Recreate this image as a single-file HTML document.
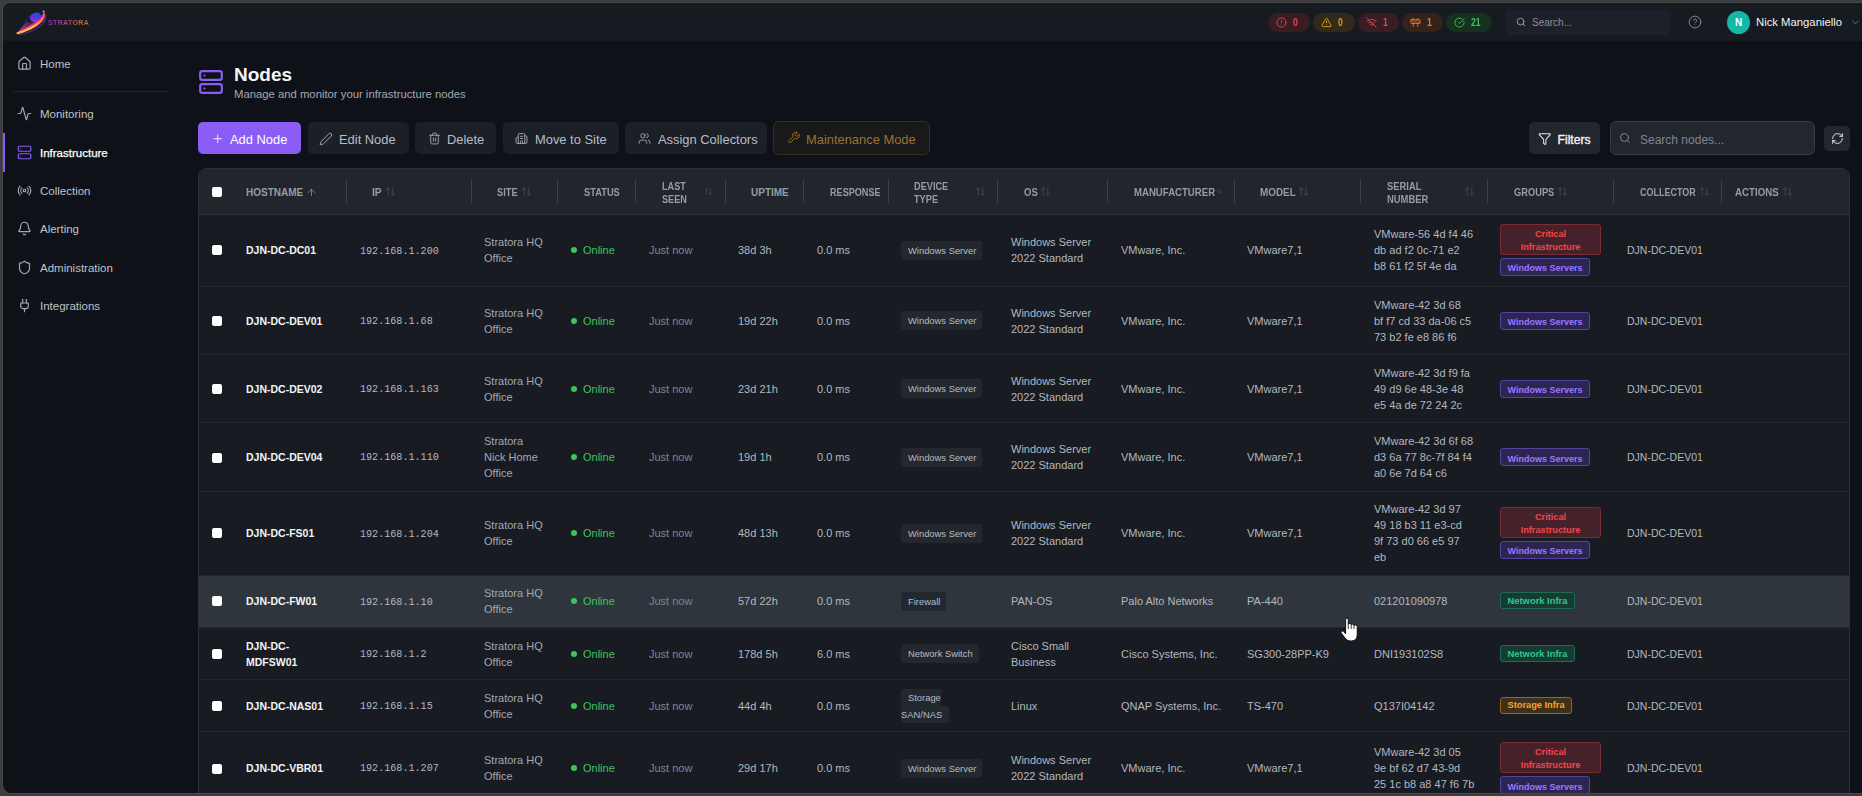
<!DOCTYPE html>
<html><head><meta charset="utf-8"><title>Nodes</title><style>
*{margin:0;padding:0}
html,body{width:1862px;height:796px;overflow:hidden;background:#3c3c3c}
body{position:relative;font-family:"Liberation Sans",sans-serif}
#win{position:absolute;left:3px;top:3px;width:1880px;height:790px;background:#0e1118;border-radius:8px;overflow:hidden;box-shadow:0 0 0 1px rgba(120,125,135,0.18)}
#abs{position:absolute;left:-3px;top:-3px;width:1862px;height:796px}
.t{position:absolute;white-space:nowrap;line-height:16px}
.ic{position:absolute;overflow:visible}
#hdr{position:absolute;left:0;top:3px;width:1862px;height:37.5px;background:#161a21}
.logo{font-size:7px;font-weight:bold;letter-spacing:0.35px;opacity:0.8;line-height:8px;background:linear-gradient(90deg,#a035e0 0%,#d04aa0 40%,#e86a50 65%,#e08a3a 80%,#f06a50 100%);-webkit-background-clip:text;background-clip:text;color:transparent}
.pill{position:absolute;top:13px;height:19px;border-radius:10px}
.pilln{font-size:10px;font-weight:bold;line-height:14px}
.hsearch{position:absolute;left:1506px;top:9px;width:164px;height:26px;background:#1d2028;border-radius:5px}
.hsearcht{font-size:10px;color:#8a9098;line-height:12px}
.avatar{position:absolute;left:1727px;top:11px;width:23px;height:23px;border-radius:50%;background:#14b8a6;color:#fff;font-size:10px;font-weight:bold;text-align:center;line-height:23px}
.uname{font-size:11.3px;color:#f2f3f5;line-height:14px}
.nav{font-size:11.5px;color:#bfc3ca;line-height:16px}
.navact{color:#ffffff;-webkit-text-stroke:0.25px #ffffff}
.title{font-size:19px;font-weight:bold;color:#f4f5f7;line-height:24px}
.sub{font-size:11.3px;color:#a3a8b0;line-height:14px}
.btn{position:absolute;top:122px;height:32px;border-radius:5px;background:#1b1f26}
.btnt{font-size:12.9px;color:#b9bdc4;line-height:16px}
.nsearch{position:absolute;left:1610px;top:121px;width:205px;height:34px;box-sizing:border-box;border:1px solid #353a43;background:#22262d;border-radius:6px}
#card{position:absolute;left:198px;top:168px;width:1652px;height:700px;box-sizing:border-box;border:1px solid #2a2e36;border-radius:8px;background:#181b22}
#thead{position:absolute;left:199px;top:169px;width:1650px;height:45px;background:#21252c;border-top-left-radius:7px;border-top-right-radius:7px;border-bottom:1px solid #30353d}
.th{font-size:10px;font-weight:bold;color:#959ca6;line-height:13px}
.tdiv{position:absolute;top:180px;width:1px;height:23px;background:#3d424a}
.cb{position:absolute;left:212px;width:10px;height:10px;background:#fff;border-radius:2px}
.row{position:absolute;left:199px;width:1650px}
.row .cb{left:13px}
.rline{position:absolute;left:199px;width:1650px;height:1px;background:#23272e}
.cell{position:absolute;top:0;height:100%;display:flex;flex-direction:column;justify-content:center;font-size:11px;line-height:16px;white-space:nowrap}
.host{font-weight:bold;font-size:10.5px;color:#f3f4f6}
.ip{font-family:"Liberation Mono",monospace;font-size:10.1px;color:#b4b9c0}
.site{color:#a3a8b0}
.online{color:#3ec45a;display:flex;flex-direction:row;align-items:center}
.dot{display:inline-block;width:6px;height:6px;border-radius:50%;background:#3ec45a;margin-right:6px}
.seen{color:#7f858e}
.val{color:#b3b8bf}
.coll{font-size:10.5px}
.dbadge{background:#23272e;color:#b8bcc3;font-size:9.4px;line-height:19px;height:19px;padding:0 6px 0 7px;border-radius:3px;position:relative;top:calc(var(--bo,0)*1px)}
.dbadge2{font-size:9.4px;line-height:17px;color:#b8bcc3}
.dbadge2 span{background:#23272e;display:inline-block;border-radius:3px}
.dbadge2 .s1{padding:0 0 0 7px;border-radius:3px 0 0 0}
.dbadge2 .s2{padding:0 6.5px 0 0;border-radius:0 3px 3px 3px}
.groups{align-items:flex-start}
.gb{font-size:9px;font-weight:bold;line-height:12.5px;padding:2px 6.5px;border:1px solid;border-radius:3px;box-sizing:border-box;text-align:center}
.gb+.gb{margin-top:3px}
.crit{font-size:9.2px;width:101px;line-height:13px;padding:3px 6.5px 0;background:#45222a;border-color:#7a2c33;color:#f0454d}
.win{background:#2c2552;border-color:#56419c;color:#9d78ff;line-height:11px;padding:4.5px 6.5px 0.5px}
.net{font-size:9.4px;background:#153b33;border-color:#1d6b52;color:#2cc98c;line-height:11px}
.sto{font-size:9.25px;background:#40301a;border-color:#9a661c;color:#f5a524;line-height:11px}
</style></head>
<body><div id="win"><div id="abs">
<div id="hdr"></div><svg class="ic" style="left:12px;top:6px;width:40px;height:32px" viewBox="0 0 40 32">
<defs>
<linearGradient id="lgs" x1="0" y1="1" x2="1" y2="0"><stop offset="0" stop-color="#ffb347"/><stop offset="0.45" stop-color="#ffcf3a"/><stop offset="0.8" stop-color="#ff7a30"/><stop offset="1" stop-color="#ff4a7a"/></linearGradient>
<linearGradient id="lgo" x1="0" y1="1" x2="1" y2="0"><stop offset="0" stop-color="#ff4d6d"/><stop offset="0.6" stop-color="#e0307a"/><stop offset="1" stop-color="#8a3cd0"/></linearGradient>
<linearGradient id="lgp" x1="0" y1="1" x2="1" y2="0"><stop offset="0" stop-color="#a038e8"/><stop offset="0.45" stop-color="#5a34e0"/><stop offset="0.8" stop-color="#2a48d8"/><stop offset="1" stop-color="#3a80f0"/></linearGradient>
<linearGradient id="lgt" x1="0" y1="1" x2="1" y2="0"><stop offset="0" stop-color="#ff5080" stop-opacity="0.95"/><stop offset="1" stop-color="#7a2cc0" stop-opacity="0.3"/></linearGradient>
</defs>
<path d="M4.8 27.6 L14 16 L22 16 L18 22 Z" fill="url(#lgt)"/>
<path d="M12 16.5 L19.5 8.5" stroke="#5a4ae8" stroke-width="1" stroke-dasharray="1 1" opacity="0.8"/><path d="M7 28.6 C15 27.2 25 23.6 30.6 17.6 C33 14.8 34 11.8 33.6 9" stroke="#7a3ad8" stroke-width="1.3" fill="none" opacity="0.6"/>
<ellipse cx="23.7" cy="11.3" rx="6" ry="4.6" transform="rotate(-22 23.7 11.3)" fill="url(#lgp)"/>
<path d="M4.6 27.8 C12 26.6 24 22.6 30 16 C33 12.5 33.5 9 32.2 6.2 C31 9 29 12 25.5 14.2 C19.5 18.5 12 23 4.6 27.8 Z" fill="url(#lgo)"/>
<path d="M5.5 27.2 C13 25 23 20.5 28.5 15.2 C31 12.5 32 10 32 7.5" stroke="url(#lgs)" stroke-width="2" fill="none" stroke-linecap="round"/>
<circle cx="31.5" cy="5.5" r="1.1" fill="#ff8a4a"/>
</svg><div class="t logo" style="left:48px;top:19px">STRATORA</div><div class="pill" style="left:1268px;width:42px;background:#3a1d22"></div><svg class="ic" style="left:1276px;top:17px;width:11px;height:11px;" viewBox="0 0 24 24" fill="none" stroke="#e5484d" stroke-width="2" stroke-linecap="round" stroke-linejoin="round"><circle cx="12" cy="12" r="10"/><line x1="12" x2="12" y1="8" y2="12"/><line x1="12" x2="12.01" y1="16" y2="16"/></svg><div class="t pilln" style="left:1292.5px;top:16px;color:#e5484d;transform:scaleX(0.86);transform-origin:0 0">0</div><div class="pill" style="left:1313px;width:42px;background:#33291a"></div><svg class="ic" style="left:1321px;top:17px;width:11px;height:11px;" viewBox="0 0 24 24" fill="none" stroke="#d4a020" stroke-width="2" stroke-linecap="round" stroke-linejoin="round"><path d="m21.73 18-8-14a2 2 0 0 0-3.48 0l-8 14A2 2 0 0 0 4 21h16a2 2 0 0 0 1.73-3"/><path d="M12 9v4"/><path d="M12 17h.01"/></svg><div class="t pilln" style="left:1337.5px;top:16px;color:#d4a020;transform:scaleX(0.86);transform-origin:0 0">0</div><div class="pill" style="left:1358px;width:41px;background:#3a1d22"></div><svg class="ic" style="left:1366px;top:17px;width:11px;height:11px;" viewBox="0 0 24 24" fill="none" stroke="#e5484d" stroke-width="2" stroke-linecap="round" stroke-linejoin="round"><path d="M12 20h.01"/><path d="M8.5 16.429a5 5 0 0 1 7 0"/><path d="M5 12.859a10 10 0 0 1 5.17-2.69"/><path d="M19 12.859a10 10 0 0 0-2.007-1.523"/><path d="M2 8.82a15 15 0 0 1 4.177-2.643"/><path d="M22 8.82a15 15 0 0 0-11.288-3.764"/><path d="m2 2 20 20"/></svg><div class="t pilln" style="left:1382.5px;top:16px;color:#e5484d;transform:scaleX(0.86);transform-origin:0 0">1</div><div class="pill" style="left:1402px;width:41px;background:#33231a"></div><svg class="ic" style="left:1410px;top:17px;width:11px;height:11px;" viewBox="0 0 24 24" fill="none" stroke="#e8782a" stroke-width="2" stroke-linecap="round" stroke-linejoin="round"><rect x="2" y="6" width="20" height="8" rx="1"/><path d="M17 14v7"/><path d="M7 14v7"/><path d="M17 3v3"/><path d="M7 3v3"/><path d="M10 14 2.3 6.3"/><path d="m14 6 7.7 7.7"/><path d="m8 6 8 8"/></svg><div class="t pilln" style="left:1426.5px;top:16px;color:#e8782a;transform:scaleX(0.86);transform-origin:0 0">1</div><div class="pill" style="left:1446px;width:46px;background:#18301f"></div><svg class="ic" style="left:1454px;top:17px;width:11px;height:11px;" viewBox="0 0 24 24" fill="none" stroke="#3fbf5f" stroke-width="2" stroke-linecap="round" stroke-linejoin="round"><path d="M21.801 10A10 10 0 1 1 17 3.335"/><path d="m9 11 3 3L22 4"/></svg><div class="t pilln" style="left:1470.5px;top:16px;color:#3fbf5f;transform:scaleX(0.86);transform-origin:0 0">21</div><div class="hsearch"></div><svg class="ic" style="left:1516px;top:17px;width:10px;height:10px;" viewBox="0 0 24 24" fill="none" stroke="#9aa0a8" stroke-width="2.2" stroke-linecap="round" stroke-linejoin="round"><circle cx="11" cy="11" r="8"/><path d="m21 21-4.3-4.3"/></svg><div class="t hsearcht" style="left:1532px;top:17px;">Search...</div><svg class="ic" style="left:1688px;top:15px;width:14px;height:14px;" viewBox="0 0 24 24" fill="none" stroke="#7f858d" stroke-width="1.7" stroke-linecap="round" stroke-linejoin="round"><circle cx="12" cy="12" r="10"/><path d="M9.09 9a3 3 0 0 1 5.83 1c0 2-3 3-3 3"/><path d="M12 17h.01"/></svg><div class="avatar">N</div><div class="t uname" style="left:1756px;top:15px;">Nick Manganiello</div><svg class="ic" style="left:1849.5px;top:17px;width:11px;height:11px;" viewBox="0 0 24 24" fill="none" stroke="#7d838c" stroke-width="1.8" stroke-linecap="round" stroke-linejoin="round"><path d="m6 9 6 6 6-6"/></svg><svg class="ic" style="left:16.5px;top:55.8px;width:15px;height:15px;" viewBox="0 0 24 24" fill="none" stroke="#a3a8b0" stroke-width="1.9" stroke-linecap="round" stroke-linejoin="round"><path d="M15 21v-8a1 1 0 0 0-1-1h-4a1 1 0 0 0-1 1v8"/><path d="M3 10a2 2 0 0 1 .709-1.528l7-5.999a2 2 0 0 1 2.582 0l7 5.999A2 2 0 0 1 21 10v9a2 2 0 0 1-2 2H5a2 2 0 0 1-2-2z"/></svg><div class="t nav" style="left:40px;top:56px;">Home</div><svg class="ic" style="left:16.5px;top:105.8px;width:15px;height:15px;" viewBox="0 0 24 24" fill="none" stroke="#a3a8b0" stroke-width="1.9" stroke-linecap="round" stroke-linejoin="round"><path d="M22 12h-2.48a2 2 0 0 0-1.93 1.46l-2.35 8.36a.25.25 0 0 1-.48 0L9.24 2.18a.25.25 0 0 0-.48 0l-2.35 8.36A2 2 0 0 1 4.49 12H2"/></svg><div class="t nav" style="left:40px;top:106px;">Monitoring</div><svg class="ic" style="left:16.5px;top:144.8px;width:15px;height:15px;" viewBox="0 0 24 24" fill="none" stroke="#8b5cf6" stroke-width="1.9" stroke-linecap="round" stroke-linejoin="round"><rect width="20" height="8" x="2" y="2" rx="2" ry="2"/><rect width="20" height="8" x="2" y="14" rx="2" ry="2"/><line x1="6" x2="6.01" y1="6" y2="6"/><line x1="6" x2="6.01" y1="18" y2="18"/></svg><div class="t nav navact" style="left:40px;top:145px;">Infrastructure</div><svg class="ic" style="left:16.5px;top:182.8px;width:15px;height:15px;" viewBox="0 0 24 24" fill="none" stroke="#a3a8b0" stroke-width="1.9" stroke-linecap="round" stroke-linejoin="round"><path d="M4.9 19.1C1 15.2 1 8.8 4.9 4.9"/><path d="M7.8 16.2c-2.3-2.3-2.3-6.1 0-8.5"/><circle cx="12" cy="12" r="2"/><path d="M16.2 7.8c2.3 2.3 2.3 6.1 0 8.5"/><path d="M19.1 4.9C23 8.8 23 15.1 19.1 19"/></svg><div class="t nav" style="left:40px;top:183px;">Collection</div><svg class="ic" style="left:16.5px;top:220.8px;width:15px;height:15px;" viewBox="0 0 24 24" fill="none" stroke="#a3a8b0" stroke-width="1.9" stroke-linecap="round" stroke-linejoin="round"><path d="M10.268 21a2 2 0 0 0 3.464 0"/><path d="M3.262 15.326A1 1 0 0 0 4 17h16a1 1 0 0 0 .74-1.673C19.41 13.956 18 12.499 18 8A6 6 0 0 0 6 8c0 4.499-1.411 5.956-2.738 7.326"/></svg><div class="t nav" style="left:40px;top:221px;">Alerting</div><svg class="ic" style="left:16.5px;top:259.8px;width:15px;height:15px;" viewBox="0 0 24 24" fill="none" stroke="#a3a8b0" stroke-width="1.9" stroke-linecap="round" stroke-linejoin="round"><path d="M20 13c0 5-3.5 7.5-7.66 8.95a1 1 0 0 1-.67-.01C7.5 20.5 4 18 4 13V6a1 1 0 0 1 1-1c2 0 4.5-1.2 6.24-2.72a1.17 1.17 0 0 1 1.520 0C14.51 3.81 17 5 19 5a1 1 0 0 1 1 1z"/></svg><div class="t nav" style="left:40px;top:260px;">Administration</div><svg class="ic" style="left:16.5px;top:297.8px;width:15px;height:15px;" viewBox="0 0 24 24" fill="none" stroke="#a3a8b0" stroke-width="1.9" stroke-linecap="round" stroke-linejoin="round"><path d="M12 22v-5"/><path d="M9 8V2"/><path d="M15 8V2"/><path d="M18 8v5a4 4 0 0 1-4 4h-4a4 4 0 0 1-4-4V8Z"/></svg><div class="t nav" style="left:40px;top:298px;">Integrations</div><div style="position:absolute;left:13px;top:91px;width:156px;height:1px;background:#22262d"></div><div style="position:absolute;left:3px;top:133px;width:2px;height:39px;background:#8b5cf6"></div><svg class="ic" style="left:197.5px;top:69px;width:26px;height:26px;" viewBox="0 0 24 24" fill="none" stroke="#8b5cf6" stroke-width="2" stroke-linecap="round" stroke-linejoin="round"><rect width="20" height="8" x="2" y="2" rx="2" ry="2"/><rect width="20" height="8" x="2" y="14" rx="2" ry="2"/><line x1="6" x2="6.01" y1="6" y2="6"/><line x1="6" x2="6.01" y1="18" y2="18"/></svg><div class="t title" style="left:234px;top:63px;">Nodes</div><div class="t sub" style="left:234px;top:87px;">Manage and monitor your infrastructure nodes</div><div class="btn" style="left:198px;width:103px;background:#8b5cf6"></div><svg class="ic" style="left:210.75px;top:131.75px;width:13.5px;height:13.5px;" viewBox="0 0 24 24" fill="none" stroke="#ffffff" stroke-width="1.5" stroke-linecap="round" stroke-linejoin="round"><path d="M5 12h14"/><path d="M12 5v14"/></svg><div class="t btnt" style="left:230px;top:132px;color:#fff">Add Node</div><div class="btn" style="left:308px;width:101px"></div><svg class="ic" style="left:319.4px;top:131.9px;width:14px;height:14px;" viewBox="0 0 24 24" fill="none" stroke="#a3a8b0" stroke-width="1.7" stroke-linecap="round" stroke-linejoin="round"><path d="M21.174 6.812a1 1 0 0 0-3.986-3.987L3.842 16.174a2 2 0 0 0-.5.83l-1.321 4.352a.5.5 0 0 0 .623.622l4.353-1.32a2 2 0 0 0 .83-.497z"/></svg><div class="t btnt" style="left:339px;top:132px;">Edit Node</div><div class="btn" style="left:415px;width:81px"></div><svg class="ic" style="left:427.7px;top:131.6px;width:13px;height:13px;" viewBox="0 0 24 24" fill="none" stroke="#a3a8b0" stroke-width="1.7" stroke-linecap="round" stroke-linejoin="round"><path d="M3 6h18"/><path d="M19 6v14c0 1-1 2-2 2H7c-1 0-2-1-2-2V6"/><path d="M8 6V4c0-1 1-2 2-2h4c1 0 2 1 2 2v2"/><line x1="10" x2="10" y1="11" y2="17"/><line x1="14" x2="14" y1="11" y2="17"/></svg><div class="t btnt" style="left:447px;top:132px;">Delete</div><div class="btn" style="left:503px;width:116px"></div><svg class="ic" style="left:514.8px;top:132.1px;width:13px;height:13px;" viewBox="0 0 24 24" fill="none" stroke="#a3a8b0" stroke-width="1.7" stroke-linecap="round" stroke-linejoin="round"><path d="M10 12h4"/><path d="M10 8h4"/><path d="M14 21v-3a2 2 0 0 0-4 0v3"/><path d="M6 10H4a2 2 0 0 0-2 2v7a2 2 0 0 0 2 2h16a2 2 0 0 0 2-2V9a2 2 0 0 0-2-2h-2"/><path d="M6 21V5a2 2 0 0 1 2-2h8a2 2 0 0 1 2 2v16"/></svg><div class="t btnt" style="left:535px;top:132px;">Move to Site</div><div class="btn" style="left:625px;width:142px"></div><svg class="ic" style="left:637.7px;top:132.1px;width:13px;height:13px;" viewBox="0 0 24 24" fill="none" stroke="#a3a8b0" stroke-width="1.7" stroke-linecap="round" stroke-linejoin="round"><path d="M16 21v-2a4 4 0 0 0-4-4H6a4 4 0 0 0-4 4v2"/><circle cx="9" cy="7" r="4"/><path d="M22 21v-2a4 4 0 0 0-3-3.87"/><path d="M16 3.13a4 4 0 0 1 0 7.75"/></svg><div class="t btnt" style="left:658px;top:132px;">Assign Collectors</div><div class="btn" style="left:773px;top:121px;height:34px;width:157px;background:#19191a;border:1px solid #3a2f1a;box-sizing:border-box;border-radius:6px"></div><svg class="ic" style="left:786.5px;top:131.2px;width:13.4px;height:13.4px;" viewBox="0 0 24 24" fill="none" stroke="#9c6f2a" stroke-width="1.7" stroke-linecap="round" stroke-linejoin="round"><path d="M14.7 6.3a1 1 0 0 0 0 1.4l1.6 1.6a1 1 0 0 0 1.4 0l3.77-3.77a6 6 0 0 1-7.94 7.94l-6.91 6.91a2.12 2.12 0 0 1-3-3l6.91-6.91a6 6 0 0 1 7.94-7.940l-3.76 3.76z"/></svg><div class="t btnt" style="left:806px;top:132px;color:#9c7230">Maintenance Mode</div><div class="btn" style="left:1529px;width:71px;background:#22262d"></div><svg class="ic" style="left:1537.5px;top:132px;width:13.5px;height:13.5px;" viewBox="0 0 24 24" fill="none" stroke="#e6e8eb" stroke-width="1.8" stroke-linecap="round" stroke-linejoin="round"><path d="M10 20a1 1 0 0 0 .553.895l2 1A1 1 0 0 0 14 21v-7a2 2 0 0 1 .517-1.341L21.74 4.67A1 1 0 0 0 21 3H3a1 1 0 0 0-.742 1.67l7.225 7.989A2 2 0 0 1 10 14z"/></svg><div class="t btnt" style="left:1557.5px;top:131.5px;color:#f4f5f7;font-size:12.2px;-webkit-text-stroke:0.35px #f4f5f7">Filters</div><div class="nsearch"></div><svg class="ic" style="left:1619px;top:131.8px;width:12px;height:12px;" viewBox="0 0 24 24" fill="none" stroke="#8a9098" stroke-width="1.8" stroke-linecap="round" stroke-linejoin="round"><circle cx="11" cy="11" r="8"/><path d="m21 21-4.3-4.3"/></svg><div class="t btnt" style="left:1640px;top:131.5px;color:#80868e;font-size:12px">Search nodes...</div><div class="btn" style="left:1824px;top:126px;width:26px;height:25px;background:#23272e"></div><svg class="ic" style="left:1830.5px;top:132px;width:13px;height:13px;" viewBox="0 0 24 24" fill="none" stroke="#e0e3e8" stroke-width="1.8" stroke-linecap="round" stroke-linejoin="round"><path d="M3 12a9 9 0 0 1 9-9 9.75 9.75 0 0 1 6.74 2.74L21 8"/><path d="M21 3v5h-5"/><path d="M21 12a9 9 0 0 1-9 9 9.75 9.75 0 0 1-6.74-2.740L3 16"/><path d="M8 16H3v5"/></svg><div id="card"></div><div id="thead"></div><div class="cb" style="top:187px"></div><div class="t th" style="left:246px;top:186px;transform:scaleX(1);transform-origin:0 0">HOSTNAME</div><div class="t th" style="left:372px;top:186px;transform:scaleX(1);transform-origin:0 0">IP</div><div class="t th" style="left:497px;top:186px;transform:scaleX(0.93);transform-origin:0 0">SITE</div><div class="t th" style="left:583.5px;top:186px;transform:scaleX(0.93);transform-origin:0 0">STATUS</div><div class="t th th2" style="left:662px;top:180px;transform:scaleX(0.915);transform-origin:0 0">LAST<br>SEEN</div><div class="t th" style="left:751px;top:186px;transform:scaleX(1);transform-origin:0 0">UPTIME</div><div class="t th" style="left:830px;top:186px;transform:scaleX(0.91);transform-origin:0 0">RESPONSE</div><div class="t th th2" style="left:914px;top:180px;transform:scaleX(0.92);transform-origin:0 0">DEVICE<br>TYPE</div><div class="t th" style="left:1024px;top:186px;transform:scaleX(0.95);transform-origin:0 0">OS</div><div class="t th" style="left:1134px;top:186px;transform:scaleX(0.96);transform-origin:0 0">MANUFACTURER</div><div class="t th" style="left:1260px;top:186px;transform:scaleX(0.99);transform-origin:0 0">MODEL</div><div class="t th th2" style="left:1387px;top:180px;transform:scaleX(0.94);transform-origin:0 0">SERIAL<br>NUMBER</div><div class="t th" style="left:1513.5px;top:186px;transform:scaleX(0.93);transform-origin:0 0">GROUPS</div><div class="t th" style="left:1640px;top:186px;transform:scaleX(0.9);transform-origin:0 0">COLLECTOR</div><div class="t th" style="left:1735px;top:186px;transform:scaleX(0.97);transform-origin:0 0">ACTIONS</div><svg class="ic" style="left:305.9px;top:186.8px;width:11px;height:11px;" viewBox="0 0 24 24" fill="none" stroke="#8c939c" stroke-width="1.8" stroke-linecap="round" stroke-linejoin="round"><path d="m5 12 7-7 7 7"/><path d="M12 19V5"/></svg><svg class="ic" style="left:384.78px;top:186.2px;width:11px;height:11px;" viewBox="0 0 24 24" fill="none" stroke="#454b54" stroke-width="1.9" stroke-linecap="round" stroke-linejoin="round"><path d="m21 16-4 4-4-4"/><path d="M17 20V4"/><path d="m3 8 4-4 4 4"/><path d="M7 4v16"/></svg><svg class="ic" style="left:521.08px;top:186.2px;width:11px;height:11px;" viewBox="0 0 24 24" fill="none" stroke="#454b54" stroke-width="1.9" stroke-linecap="round" stroke-linejoin="round"><path d="m21 16-4 4-4-4"/><path d="M17 20V4"/><path d="m3 8 4-4 4 4"/><path d="M7 4v16"/></svg><svg class="ic" style="left:975.18px;top:186.2px;width:11px;height:11px;" viewBox="0 0 24 24" fill="none" stroke="#454b54" stroke-width="1.9" stroke-linecap="round" stroke-linejoin="round"><path d="m21 16-4 4-4-4"/><path d="M17 20V4"/><path d="m3 8 4-4 4 4"/><path d="M7 4v16"/></svg><svg class="ic" style="left:1040.18px;top:186.2px;width:11px;height:11px;" viewBox="0 0 24 24" fill="none" stroke="#454b54" stroke-width="1.9" stroke-linecap="round" stroke-linejoin="round"><path d="m21 16-4 4-4-4"/><path d="M17 20V4"/><path d="m3 8 4-4 4 4"/><path d="M7 4v16"/></svg><svg class="ic" style="left:1297.98px;top:186.2px;width:11px;height:11px;" viewBox="0 0 24 24" fill="none" stroke="#454b54" stroke-width="1.9" stroke-linecap="round" stroke-linejoin="round"><path d="m21 16-4 4-4-4"/><path d="M17 20V4"/><path d="m3 8 4-4 4 4"/><path d="M7 4v16"/></svg><svg class="ic" style="left:1463.88px;top:186.2px;width:11px;height:11px;" viewBox="0 0 24 24" fill="none" stroke="#454b54" stroke-width="1.9" stroke-linecap="round" stroke-linejoin="round"><path d="m21 16-4 4-4-4"/><path d="M17 20V4"/><path d="m3 8 4-4 4 4"/><path d="M7 4v16"/></svg><svg class="ic" style="left:1557.08px;top:186.2px;width:11px;height:11px;" viewBox="0 0 24 24" fill="none" stroke="#454b54" stroke-width="1.9" stroke-linecap="round" stroke-linejoin="round"><path d="m21 16-4 4-4-4"/><path d="M17 20V4"/><path d="m3 8 4-4 4 4"/><path d="M7 4v16"/></svg><svg class="ic" style="left:1699.08px;top:186.2px;width:11px;height:11px;" viewBox="0 0 24 24" fill="none" stroke="#454b54" stroke-width="1.9" stroke-linecap="round" stroke-linejoin="round"><path d="m21 16-4 4-4-4"/><path d="M17 20V4"/><path d="m3 8 4-4 4 4"/><path d="M7 4v16"/></svg><svg class="ic" style="left:1782.08px;top:186.2px;width:11px;height:11px;" viewBox="0 0 24 24" fill="none" stroke="#454b54" stroke-width="1.9" stroke-linecap="round" stroke-linejoin="round"><path d="m21 16-4 4-4-4"/><path d="M17 20V4"/><path d="m3 8 4-4 4 4"/><path d="M7 4v16"/></svg><svg class="ic" style="left:703.75px;top:187.25px;width:9px;height:9px;" viewBox="0 0 24 24" fill="none" stroke="#454b54" stroke-width="2" stroke-linecap="round" stroke-linejoin="round"><path d="m21 16-4 4-4-4"/><path d="M17 20V4"/><path d="m3 8 4-4 4 4"/><path d="M7 4v16"/></svg><svg class="ic" style="left:1217px;top:189.3px;width:4.8px;height:4.8px;" viewBox="0 0 24 24" fill="none" stroke="#454b54" stroke-width="3" stroke-linecap="round" stroke-linejoin="round"><path d="m21 16-4 4-4-4"/><path d="M17 20V4"/><path d="m3 8 4-4 4 4"/><path d="M7 4v16"/></svg><div class="tdiv" style="left:346px"></div><div class="tdiv" style="left:471px"></div><div class="tdiv" style="left:557px"></div><div class="tdiv" style="left:635px"></div><div class="tdiv" style="left:725px"></div><div class="tdiv" style="left:803px"></div><div class="tdiv" style="left:888px"></div><div class="tdiv" style="left:997px"></div><div class="tdiv" style="left:1107px"></div><div class="tdiv" style="left:1234px"></div><div class="tdiv" style="left:1360px"></div><div class="tdiv" style="left:1487px"></div><div class="tdiv" style="left:1613px"></div><div class="tdiv" style="left:1721px"></div><div class="row" style="top:215px;height:71px;background:#181b22"><div class="cb" style="top:30px;left:13px"></div><div class="cell host" style="left:47px;top:-1px;--bo:1">DJN-DC-DC01</div><div class="cell ip" style="left:161px;top:1px;--bo:1">192.168.1.200</div><div class="cell site" style="left:285px;top:-1px;--bo:1">Stratora HQ<br>Office</div><div class="cell online" style="left:372px;top:-1px;--bo:1"><span class="dot"></span>Online</div><div class="cell seen" style="left:450px;top:-1px;--bo:1">Just now</div><div class="cell val" style="left:539px;top:-1px;--bo:1">38d 3h</div><div class="cell val" style="left:618px;top:-1px;--bo:1">0.0 ms</div><div class="cell dev" style="left:702px;top:-1px;--bo:1"><div class="dbadge">Windows Server</div></div><div class="cell val" style="left:812px;top:-1px;--bo:1">Windows Server<br>2022 Standard</div><div class="cell val" style="left:922px;top:-1px;--bo:1">VMware, Inc.</div><div class="cell val" style="left:1048px;top:-1px;--bo:1">VMware7,1</div><div class="cell val" style="left:1175px;top:-1px;--bo:1">VMware-56 4d f4 46<br>db ad f2 0c-71 e2<br>b8 61 f2 5f 4e da</div><div class="cell groups" style="left:1301px;top:-1px;--bo:1"><div class="gb crit">Critical<br>Infrastructure</div><div class="gb win">Windows Servers</div></div><div class="cell val coll" style="left:1428px;top:-1px;--bo:1">DJN-DC-DEV01</div></div><div class="rline" style="top:286px"></div><div class="row" style="top:287px;height:67px;background:#181b22"><div class="cb" style="top:29px;left:13px"></div><div class="cell host" style="left:47px;top:0px;--bo:0">DJN-DC-DEV01</div><div class="cell ip" style="left:161px;top:1px;--bo:0">192.168.1.68</div><div class="cell site" style="left:285px;top:0px;--bo:0">Stratora HQ<br>Office</div><div class="cell online" style="left:372px;top:0px;--bo:0"><span class="dot"></span>Online</div><div class="cell seen" style="left:450px;top:0px;--bo:0">Just now</div><div class="cell val" style="left:539px;top:0px;--bo:0">19d 22h</div><div class="cell val" style="left:618px;top:0px;--bo:0">0.0 ms</div><div class="cell dev" style="left:702px;top:0px;--bo:0"><div class="dbadge">Windows Server</div></div><div class="cell val" style="left:812px;top:0px;--bo:0">Windows Server<br>2022 Standard</div><div class="cell val" style="left:922px;top:0px;--bo:0">VMware, Inc.</div><div class="cell val" style="left:1048px;top:0px;--bo:0">VMware7,1</div><div class="cell val" style="left:1175px;top:0px;--bo:0">VMware-42 3d 68<br>bf f7 cd 33 da-06 c5<br>73 b2 fe e8 86 f6</div><div class="cell groups" style="left:1301px;top:0px;--bo:0"><div class="gb win">Windows Servers</div></div><div class="cell val coll" style="left:1428px;top:0px;--bo:0">DJN-DC-DEV01</div></div><div class="rline" style="top:354px"></div><div class="row" style="top:355px;height:67px;background:#181b22"><div class="cb" style="top:29px;left:13px"></div><div class="cell host" style="left:47px;top:0px;--bo:0">DJN-DC-DEV02</div><div class="cell ip" style="left:161px;top:1px;--bo:0">192.168.1.163</div><div class="cell site" style="left:285px;top:0px;--bo:0">Stratora HQ<br>Office</div><div class="cell online" style="left:372px;top:0px;--bo:0"><span class="dot"></span>Online</div><div class="cell seen" style="left:450px;top:0px;--bo:0">Just now</div><div class="cell val" style="left:539px;top:0px;--bo:0">23d 21h</div><div class="cell val" style="left:618px;top:0px;--bo:0">0.0 ms</div><div class="cell dev" style="left:702px;top:0px;--bo:0"><div class="dbadge">Windows Server</div></div><div class="cell val" style="left:812px;top:0px;--bo:0">Windows Server<br>2022 Standard</div><div class="cell val" style="left:922px;top:0px;--bo:0">VMware, Inc.</div><div class="cell val" style="left:1048px;top:0px;--bo:0">VMware7,1</div><div class="cell val" style="left:1175px;top:0px;--bo:0">VMware-42 3d f9 fa<br>49 d9 6e 48-3e 48<br>e5 4a de 72 24 2c</div><div class="cell groups" style="left:1301px;top:0px;--bo:0"><div class="gb win">Windows Servers</div></div><div class="cell val coll" style="left:1428px;top:0px;--bo:0">DJN-DC-DEV01</div></div><div class="rline" style="top:422px"></div><div class="row" style="top:423px;height:68px;background:#181b22"><div class="cb" style="top:30px;left:13px"></div><div class="cell host" style="left:47px;top:0px;--bo:0">DJN-DC-DEV04</div><div class="cell ip" style="left:161px;top:1px;--bo:0">192.168.1.110</div><div class="cell site" style="left:285px;top:0px;--bo:0">Stratora<br>Nick Home<br>Office</div><div class="cell online" style="left:372px;top:0px;--bo:0"><span class="dot"></span>Online</div><div class="cell seen" style="left:450px;top:0px;--bo:0">Just now</div><div class="cell val" style="left:539px;top:0px;--bo:0">19d 1h</div><div class="cell val" style="left:618px;top:0px;--bo:0">0.0 ms</div><div class="cell dev" style="left:702px;top:0px;--bo:0"><div class="dbadge">Windows Server</div></div><div class="cell val" style="left:812px;top:0px;--bo:0">Windows Server<br>2022 Standard</div><div class="cell val" style="left:922px;top:0px;--bo:0">VMware, Inc.</div><div class="cell val" style="left:1048px;top:0px;--bo:0">VMware7,1</div><div class="cell val" style="left:1175px;top:0px;--bo:0">VMware-42 3d 6f 68<br>d3 6a 77 8c-7f 84 f4<br>a0 6e 7d 64 c6</div><div class="cell groups" style="left:1301px;top:0px;--bo:0"><div class="gb win">Windows Servers</div></div><div class="cell val coll" style="left:1428px;top:0px;--bo:0">DJN-DC-DEV01</div></div><div class="rline" style="top:491px"></div><div class="row" style="top:492px;height:83px;background:#181b22"><div class="cb" style="top:36px;left:13px"></div><div class="cell host" style="left:47px;top:-1px;--bo:1">DJN-DC-FS01</div><div class="cell ip" style="left:161px;top:1px;--bo:1">192.168.1.204</div><div class="cell site" style="left:285px;top:-1px;--bo:1">Stratora HQ<br>Office</div><div class="cell online" style="left:372px;top:-1px;--bo:1"><span class="dot"></span>Online</div><div class="cell seen" style="left:450px;top:-1px;--bo:1">Just now</div><div class="cell val" style="left:539px;top:-1px;--bo:1">48d 13h</div><div class="cell val" style="left:618px;top:-1px;--bo:1">0.0 ms</div><div class="cell dev" style="left:702px;top:-1px;--bo:1"><div class="dbadge">Windows Server</div></div><div class="cell val" style="left:812px;top:-1px;--bo:1">Windows Server<br>2022 Standard</div><div class="cell val" style="left:922px;top:-1px;--bo:1">VMware, Inc.</div><div class="cell val" style="left:1048px;top:-1px;--bo:1">VMware7,1</div><div class="cell val" style="left:1175px;top:-1px;--bo:1">VMware-42 3d 97<br>49 18 b3 11 e3-cd<br>9f 73 d0 66 e5 97<br>eb</div><div class="cell groups" style="left:1301px;top:-1px;--bo:1"><div class="gb crit">Critical<br>Infrastructure</div><div class="gb win">Windows Servers</div></div><div class="cell val coll" style="left:1428px;top:-1px;--bo:1">DJN-DC-DEV01</div></div><div class="rline" style="top:575px"></div><div class="row" style="top:576px;height:51px;background:#2f353c"><div class="cb" style="top:20px;left:13px"></div><div class="cell host" style="left:47px;top:-1px;--bo:1">DJN-DC-FW01</div><div class="cell ip" style="left:161px;top:1px;--bo:1">192.168.1.10</div><div class="cell site" style="left:285px;top:-1px;--bo:1">Stratora HQ<br>Office</div><div class="cell online" style="left:372px;top:-1px;--bo:1"><span class="dot"></span>Online</div><div class="cell seen" style="left:450px;top:-1px;--bo:1">Just now</div><div class="cell val" style="left:539px;top:-1px;--bo:1">57d 22h</div><div class="cell val" style="left:618px;top:-1px;--bo:1">0.0 ms</div><div class="cell dev" style="left:702px;top:-1px;--bo:1"><div class="dbadge">Firewall</div></div><div class="cell val" style="left:812px;top:-1px;--bo:1">PAN-OS</div><div class="cell val" style="left:922px;top:-1px;--bo:1">Palo Alto Networks</div><div class="cell val" style="left:1048px;top:-1px;--bo:1">PA-440</div><div class="cell val" style="left:1175px;top:-1px;--bo:1">021201090978</div><div class="cell groups" style="left:1301px;top:-1px;--bo:1"><div class="gb net">Network Infra</div></div><div class="cell val coll" style="left:1428px;top:-1px;--bo:1">DJN-DC-DEV01</div></div><div class="rline" style="top:627px"></div><div class="row" style="top:628px;height:51px;background:#181b22"><div class="cb" style="top:21px;left:13px"></div><div class="cell host" style="left:47px;top:0px;--bo:0">DJN-DC-<br>MDFSW01</div><div class="cell ip" style="left:161px;top:1px;--bo:0">192.168.1.2</div><div class="cell site" style="left:285px;top:0px;--bo:0">Stratora HQ<br>Office</div><div class="cell online" style="left:372px;top:0px;--bo:0"><span class="dot"></span>Online</div><div class="cell seen" style="left:450px;top:0px;--bo:0">Just now</div><div class="cell val" style="left:539px;top:0px;--bo:0">178d 5h</div><div class="cell val" style="left:618px;top:0px;--bo:0">6.0 ms</div><div class="cell dev" style="left:702px;top:0px;--bo:0"><div class="dbadge">Network Switch</div></div><div class="cell val" style="left:812px;top:0px;--bo:0">Cisco Small<br>Business</div><div class="cell val" style="left:922px;top:0px;--bo:0">Cisco Systems, Inc.</div><div class="cell val" style="left:1048px;top:0px;--bo:0">SG300-28PP-K9</div><div class="cell val" style="left:1175px;top:0px;--bo:0">DNI193102S8</div><div class="cell groups" style="left:1301px;top:0px;--bo:0"><div class="gb net">Network Infra</div></div><div class="cell val coll" style="left:1428px;top:0px;--bo:0">DJN-DC-DEV01</div></div><div class="rline" style="top:679px"></div><div class="row" style="top:680px;height:51px;background:#181b22"><div class="cb" style="top:21px;left:13px"></div><div class="cell host" style="left:47px;top:0px;--bo:0">DJN-DC-NAS01</div><div class="cell ip" style="left:161px;top:1px;--bo:0">192.168.1.15</div><div class="cell site" style="left:285px;top:0px;--bo:0">Stratora HQ<br>Office</div><div class="cell online" style="left:372px;top:0px;--bo:0"><span class="dot"></span>Online</div><div class="cell seen" style="left:450px;top:0px;--bo:0">Just now</div><div class="cell val" style="left:539px;top:0px;--bo:0">44d 4h</div><div class="cell val" style="left:618px;top:0px;--bo:0">0.0 ms</div><div class="cell dev" style="left:702px;top:0px;--bo:0"><div class="dbadge2"><span class="s1">Storage</span><br><span class="s2">SAN/NAS</span></div></div><div class="cell val" style="left:812px;top:0px;--bo:0">Linux</div><div class="cell val" style="left:922px;top:0px;--bo:0">QNAP Systems, Inc.</div><div class="cell val" style="left:1048px;top:0px;--bo:0">TS-470</div><div class="cell val" style="left:1175px;top:0px;--bo:0">Q137I04142</div><div class="cell groups" style="left:1301px;top:0px;--bo:0"><div class="gb sto">Storage Infra</div></div><div class="cell val coll" style="left:1428px;top:0px;--bo:0">DJN-DC-DEV01</div></div><div class="rline" style="top:731px"></div><div class="row" style="top:732px;height:72px;background:#181b22"><div class="cb" style="top:32px;left:13px"></div><div class="cell host" style="left:47px;top:0px;--bo:0">DJN-DC-VBR01</div><div class="cell ip" style="left:161px;top:1px;--bo:0">192.168.1.207</div><div class="cell site" style="left:285px;top:0px;--bo:0">Stratora HQ<br>Office</div><div class="cell online" style="left:372px;top:0px;--bo:0"><span class="dot"></span>Online</div><div class="cell seen" style="left:450px;top:0px;--bo:0">Just now</div><div class="cell val" style="left:539px;top:0px;--bo:0">29d 17h</div><div class="cell val" style="left:618px;top:0px;--bo:0">0.0 ms</div><div class="cell dev" style="left:702px;top:0px;--bo:0"><div class="dbadge">Windows Server</div></div><div class="cell val" style="left:812px;top:0px;--bo:0">Windows Server<br>2022 Standard</div><div class="cell val" style="left:922px;top:0px;--bo:0">VMware, Inc.</div><div class="cell val" style="left:1048px;top:0px;--bo:0">VMware7,1</div><div class="cell val" style="left:1175px;top:0px;--bo:0">VMware-42 3d 05<br>9e bf 62 d7 43-9d<br>25 1c b8 a8 47 f6 7b</div><div class="cell groups" style="left:1301px;top:0px;--bo:0"><div class="gb crit">Critical<br>Infrastructure</div><div class="gb win">Windows Servers</div></div><div class="cell val coll" style="left:1428px;top:0px;--bo:0">DJN-DC-DEV01</div></div><div class="rline" style="top:804px"></div><svg class="ic" style="left:1330px;top:610px;width:40px;height:35px" viewBox="0 0 40 35">
<path d="M15.6 9.6 Q15.6 8.2 16.9 8.2 Q18.2 8.2 18.2 9.6 L18.2 14.6 Q18.2 13.4 19.7 13.4 Q21.2 13.4 21.2 14.6 L21.2 15.2 Q21.2 14.2 22.6 14.2 Q24 14.2 24 15.4 L24 16 Q24 15 25.6 15 Q27.2 15 27.2 16.6 L27.2 24.5 Q27.2 30.9 21.5 30.9 L19.8 30.9 Q17.2 30.9 15.2 28.2 L11.4 23.2 Q10.4 21.9 11.5 21.2 Q12.6 20.6 13.6 21.6 L15.6 23.8 Z" fill="#fff" stroke="#0a0a0a" stroke-width="0.9" stroke-linejoin="round"/>
<path d="M18.3 14.8 V19 M21.2 15.2 V19 M24 16 V19" stroke="#0a0a0a" stroke-width="0.8"/>
</svg>
</div></div></body></html>
